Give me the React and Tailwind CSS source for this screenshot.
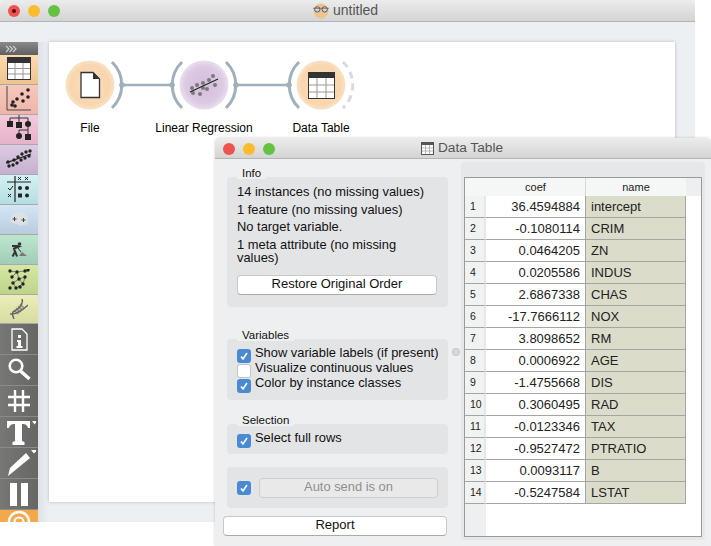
import { Fragment } from 'react';

const FONT = "font-['Liberation_Sans',Arial,sans-serif]";

const rows = [
  ['36.4594884', 'intercept'],
  ['-0.1080114', 'CRIM'],
  ['0.0464205', 'ZN'],
  ['0.0205586', 'INDUS'],
  ['2.6867338', 'CHAS'],
  ['-17.7666112', 'NOX'],
  ['3.8098652', 'RM'],
  ['0.0006922', 'AGE'],
  ['-1.4755668', 'DIS'],
  ['0.3060495', 'RAD'],
  ['-0.0123346', 'TAX'],
  ['-0.9527472', 'PTRATIO'],
  ['0.0093117', 'B'],
  ['-0.5247584', 'LSTAT'],
];

function Dots({ pts, r = 1.7, fill = '#222' }) {
  return pts.map(([x, y], i) => <circle key={i} cx={x} cy={y} r={r} fill={fill} />);
}

function TableIcon() {
  return (
    <svg className="mb-[3px]" width="24" height="23" viewBox="0 0 24 23">
      <rect x="0.5" y="0.5" width="23" height="22" fill="#fff" stroke="#333" />
      <rect x="0" y="0" width="24" height="6" fill="#333" />
      <path d="M8 6V22M16 6V22M1 11.5H23M1 17H23" stroke="#999" strokeWidth="1" />
    </svg>
  );
}

function ScatterIcon() {
  return (
    <svg className="mb-[2px]" width="26" height="26" viewBox="0 0 26 26">
      <path d="M1 0V24H25" fill="none" stroke="#444" strokeWidth="1" />
      <Dots pts={[[6, 19], [9, 20], [7, 16], [11, 13], [16, 8], [17, 15], [22, 4], [22, 11]]} r="1.8" />
    </svg>
  );
}

function TreeIcon() {
  return (
    <svg className="mb-[1px]" width="26" height="28" viewBox="0 0 26 28">
      <path d="M4 6V3H22V6M13 0V7M13 15H22M13 15V19M22 12V19" fill="none" stroke="#333" strokeWidth="1" />
      <rect x="1" y="6" width="6" height="6" fill="#222" />
      <rect x="10" y="7" width="6" height="6" fill="#222" />
      <circle cx="22" cy="9" r="3" fill="#222" />
      <circle cx="13" cy="21" r="3" fill="#222" />
      <rect x="19" y="19" width="6" height="6" fill="#222" />
    </svg>
  );
}

function RegressionIcon() {
  return (
    <svg className="mb-[3px]" width="26" height="20" viewBox="0 0 26 20">
      <path d="M0 15L25 6" stroke="#222" strokeWidth="1.2" />
      <Dots pts={[[2, 14], [3, 18], [7, 17], [8, 12], [11, 15], [12, 9], [15, 12], [16, 6], [19, 10], [20, 4], [23, 8], [24, 3]]} />
    </svg>
  );
}

function SieveIcon() {
  return (
    <svg className="mb-[2px]" width="26" height="26" viewBox="0 0 26 26">
      <path d="M1 6H25M9 0V26" stroke="#222" strokeWidth="1.2" />
      <path d="M12 1L15 4M15 1L12 4M19 1L22 4M22 1L19 4M2 18L5 21M5 18L2 21" stroke="#222" />
      <path d="M2 12L4 14L7 10" fill="none" stroke="#222" />
      <circle cx="14" cy="12" r="2" fill="#222" />
      <circle cx="21" cy="12" r="2" fill="#222" />
      <rect x="12" y="17.5" width="4" height="4" fill="#222" />
      <circle cx="21" cy="19.5" r="2" fill="#222" />
    </svg>
  );
}

function CloudIcon() {
  return (
    <svg className="mb-[1px]" width="18" height="15" viewBox="0 0 18 15">
      <Dots pts={[[4, 5], [7, 3], [6, 9], [9, 6], [12, 3], [15, 6], [13, 10], [10, 11], [15, 10], [3, 8]]} r="2.8" fill="#dde1e6" />
      <path d="M2.5 7H6.5M4.5 5V9M11.5 8H15.5M13.5 6V10" stroke="#444" strokeWidth="1" />
    </svg>
  );
}

function WorkerIcon() {
  return (
    <svg width="16" height="15" viewBox="0 0 16 15">
      <circle cx="8.5" cy="2" r="1.8" fill="#333" />
      <path d="M1 4H6L8 4.5L3 6.5L4 10L1.5 14.5M4 9L6 14.5" fill="none" stroke="#333" strokeWidth="2" />
      <path d="M7 6L10 10" stroke="#333" />
      <path d="M8 14L11 10L16 14Z" fill="#777" />
    </svg>
  );
}

function NetworkIcon() {
  return (
    <svg width="22" height="21" viewBox="0 0 22 21">
      <path d="M2 2L9 3L17 2L20 1M4 8L9 3L11 10L17 8L15 15L11 10L5 14L8 19L15 15" fill="none" stroke="#555" strokeWidth="0.7" />
      <Dots pts={[[2, 2], [9, 3], [17, 2], [20, 1], [4, 8], [11, 10], [17, 8], [5, 14], [15, 15], [2, 19], [8, 19], [12, 18]]} />
    </svg>
  );
}

function DnaIcon() {
  return (
    <svg width="18" height="20" viewBox="0 0 18 20">
      <path d="M6 14L12 5L14 10L8 16Z" fill="#c2c2ae" />
      <path d="M6 9L10 13M8 7L12 11M10 5L14 9M4 11L8 15" stroke="#8e8e80" strokeWidth="1.2" />
      <path d="M12 0C14 6 7 11 3 13C2 15 3 18 4 20M0 15C6 16 14 10 18 6" fill="none" stroke="#666" strokeWidth="1.5" />
    </svg>
  );
}

function InfoIcon() {
  return (
    <svg width="17" height="23" viewBox="0 0 17 23">
      <path d="M1 1H11L16 6V22H1Z" fill="none" stroke="#fff" strokeWidth="1.3" />
      <rect x="7" y="7" width="3" height="3" fill="#fff" />
      <path d="M6 12H10V18H11.5V20H5.5V18H7V14H6Z" fill="#fff" />
    </svg>
  );
}

function SearchIcon() {
  return (
    <svg width="24" height="24" viewBox="0 0 24 24">
      <circle cx="9" cy="8" r="6.3" fill="none" stroke="#fff" strokeWidth="2.6" />
      <path d="M13.5 13L22.5 21" stroke="#fff" strokeWidth="3.4" />
    </svg>
  );
}

function HashIcon() {
  return (
    <svg width="22" height="22" viewBox="0 0 22 22">
      <path d="M7 0V22M15 0V22M0 7H22M0 15H22" stroke="#fff" strokeWidth="2.4" />
    </svg>
  );
}

function TextIcon() {
  return (
    <svg width="34" height="27" viewBox="0 0 34 27">
      <path d="M5 2H28V9H26C25 6 24 5 20 5V22L22.5 23V26H10.5V23L13 22V5C9 5 8 6 7 9H5Z" fill="#fff" />
      <path d="M30 2H35L32.5 5.5Z" fill="#fff" />
    </svg>
  );
}

function PenIcon() {
  return (
    <svg width="34" height="27" viewBox="0 0 34 27">
      <path d="M24 3L28 8L11 22L6 26L8 18Z" fill="#fff" />
      <path d="M29 0H35L32 3.5Z" fill="#fff" />
    </svg>
  );
}

function PauseIcon() {
  return (
    <div className="flex gap-[4px]">
      <div className="w-[7px] h-[23px] bg-white" />
      <div className="w-[7px] h-[23px] bg-white" />
    </div>
  );
}

const categories = [
  ['h-[30px] bg-linear-to-b from-[#fbdbb0] to-[#eec490]', <TableIcon />],
  ['h-[30px] bg-linear-to-b from-[#f8c8bb] to-[#efb5aa]', <ScatterIcon />],
  ['h-[30px] bg-linear-to-b from-[#f5c9db] to-[#e5b2ca]', <TreeIcon />],
  ['h-[30px] bg-linear-to-b from-[#dccbe3] to-[#c6b0d0]', <RegressionIcon />],
  ['h-[30px] bg-linear-to-b from-[#d3f1f2] to-[#b5dee2]', <SieveIcon />],
  ['h-[30px] bg-linear-to-b from-[#d5e6f4] to-[#b7ccdf]', <CloudIcon />],
  ['h-[30px] bg-linear-to-b from-[#bde6cf] to-[#a0cdb8]', <WorkerIcon />],
  ['h-[30px] bg-linear-to-b from-[#d6e8a4] to-[#bdd38a]', <NetworkIcon />],
  ['h-[29px] bg-linear-to-b from-[#ebeeb9] to-[#d8dca0]', <DnaIcon />],
];

const tools = [<InfoIcon />, <SearchIcon />, <HashIcon />, <TextIcon />, <PenIcon />, <PauseIcon />];

function Sidebar() {
  return (
    <div className="w-[38px] flex flex-col shrink-0">
      <div className="h-[13px] bg-linear-to-b from-[#8a8a8a] to-[#5f5f5f] flex items-center pl-[5px]">
        <svg width="12" height="8" viewBox="0 0 12 8">
          <path d="M1 1L4 4L1 7M4.5 1L7.5 4L4.5 7M8 1L11 4L8 7" fill="none" stroke="#d0d0d0" strokeWidth="1.1" />
        </svg>
      </div>
      {categories.map(([cls, icon], i) => (
        <div key={i} className={`${cls} border-b border-[#a8a8a8] flex items-center justify-center`}>
          {icon}
        </div>
      ))}
      {tools.map((icon, i) => (
        <div key={i} className="h-[31px] bg-linear-to-r from-[#777876] to-[#666664] border-b border-[#8b8b8b] flex items-center justify-center">
          {icon}
        </div>
      ))}
      <div className="flex-1 bg-[#f4a84c] flex justify-center overflow-hidden">
        <svg width="24" height="12" viewBox="0 0 24 12">
          <circle cx="12" cy="12" r="10" fill="none" stroke="#fff" strokeWidth="2.4" />
          <circle cx="12" cy="12" r="4.5" fill="none" stroke="#fff" strokeWidth="2.2" />
        </svg>
      </div>
    </div>
  );
}

function Lights({ dot }) {
  const base = 'w-[12px] h-[12px] rounded-full';
  return (
    <div className="absolute left-[8px] top-[5px] flex gap-[8px]">
      <div className={`${base} bg-[#f0524e] flex items-center justify-center`}>
        {dot && <div className="w-[4px] h-[4px] rounded-full bg-[#5a0d0b]" />}
      </div>
      <div className={`${base} bg-[#fbbb2e]`} />
      <div className={`${base} bg-[#63c244]`} />
    </div>
  );
}

function GlassesFace() {
  return (
    <svg width="16" height="16" viewBox="0 0 15 15">
      <circle cx="7.5" cy="7.5" r="7" fill="#ecc48f" />
      <circle cx="4" cy="6" r="2.5" fill="#cfd4d6" stroke="#555" strokeWidth="0.9" />
      <circle cx="11" cy="6" r="2.5" fill="#cfd4d6" stroke="#555" strokeWidth="0.9" />
      <path d="M0 5H15" stroke="#555" strokeWidth="0.6" />
    </svg>
  );
}

function Scheme() {
  return (
    <svg className="absolute left-0 top-0" width="400" height="130" viewBox="0 0 400 130">
      <defs>
        <radialGradient id="peach">
          <stop offset="0%" stopColor="#f9e0c4" />
          <stop offset="80%" stopColor="#f8d6ad" />
          <stop offset="100%" stopColor="#f9e3c9" />
        </radialGradient>
        <radialGradient id="lilac">
          <stop offset="0%" stopColor="#d3bedc" />
          <stop offset="75%" stopColor="#dcc9e3" />
          <stop offset="100%" stopColor="#e9dfee" />
        </radialGradient>
      </defs>
      <g fill="none" stroke="#9fb0ba" strokeWidth="3">
        <path d="M122 43H172M236 43H289" strokeWidth="2.4" />
        <path d="M112 20A32 32 0 0 1 112 66" />
        <path d="M182 20A32 32 0 0 0 182 66" />
        <path d="M226 20A32 32 0 0 1 226 66" />
        <path d="M299 20A32 32 0 0 0 299 66" />
        <path d="M343 20A32 32 0 0 1 343 66" strokeDasharray="7 5" stroke="#d4dbe0" />
      </g>
      <g fill="#9fb0ba">
        <circle cx="122" cy="43" r="2.8" />
        <circle cx="172" cy="43" r="2.8" />
        <circle cx="236" cy="43" r="2.8" />
        <circle cx="289" cy="43" r="2.8" />
      </g>
      <circle cx="90" cy="43" r="24.5" fill="url(#peach)" />
      <circle cx="204" cy="43" r="24.5" fill="url(#lilac)" />
      <circle cx="321" cy="43" r="24.5" fill="url(#peach)" />
      <path d="M81 30.5H93L99.5 37V55.5H81Z" fill="#fff" stroke="#333" strokeWidth="1.3" />
      <path d="M93 30L100 37H93Z" fill="#333" />
      <g transform="translate(191 33)">
        <Dots pts={[[2, 18], [9, 19], [1, 13], [6, 10], [12, 8], [12, 13], [18, 5], [22, 1], [24, 10], [16, 14]]} r="2" fill="#7a7a7a" />
        <path d="M-1 17L27 4" stroke="#222" strokeWidth="1.1" />
      </g>
      <g transform="translate(308 30)">
        <rect x="0.5" y="0.5" width="26" height="26" fill="#fff" stroke="#333" />
        <rect x="0" y="0" width="27" height="6" fill="#333" />
        <path d="M9 6V26M18 6V26M1 13H26M1 20H26" stroke="#999" />
      </g>
    </svg>
  );
}

function NodeLabel({ className, children }) {
  return <div className={`absolute top-[79px] -translate-x-1/2 text-[12px] leading-[14px] text-black whitespace-nowrap ${className}`}>{children}</div>;
}

function Group({ title, className, children }) {
  return (
    <div className={`relative bg-[#e3e4e6] rounded-[4px] ${className}`}>
      {title && (
        <div className="absolute left-[10px] -top-[4px] -translate-y-1/2 px-[5px] text-[11.5px] leading-[12px] text-[#111] bg-[#eeeff1]">
          {title}
        </div>
      )}
      {children}
    </div>
  );
}

function Check({ on = true }) {
  return (
    <div className={`w-[14px] h-[14px] rounded-[3px] shrink-0 flex items-center justify-center ${on ? 'bg-[#4a8ad3]' : 'bg-white border border-[#c4c4c4]'}`}>
      {on && (
        <svg width="10" height="10" viewBox="0 0 10 10">
          <path d="M2 5.5L4 8L8 2" fill="none" stroke="#fff" strokeWidth="1.6" />
        </svg>
      )}
    </div>
  );
}

function CheckRow({ on, children }) {
  return (
    <div className="h-[15px] flex items-center gap-[4px] text-[12.9px] text-[#111] whitespace-nowrap">
      <Check on={on} />
      <span className="-mt-[6px]">{children}</span>
    </div>
  );
}

function DataTable() {
  return (
    <div className="bg-white border border-[#9a9a9a] h-[360px] overflow-hidden">
      <div className="grid grid-cols-[21px_99px_101px_1fr] text-[13px] text-[#222]">
        <div className="col-span-2 h-[18px] bg-[#f5f6f6] flex items-center justify-center pl-[21px] text-[11px]">coef</div>
        <div className="h-[18px] bg-[#f5f6f6] border-l border-[#d8d8d8] flex items-center justify-center text-[11px]">name</div>
        <div className="h-[18px] bg-[#eeeff1]" />
        {rows.map(([coef, name], i) => (
          <Fragment key={name}>
            <div className="h-[22px] bg-[#f1f2f2] border-b border-[#a5a5a5] border-r-2 border-r-[#e6e7e7] flex items-center pl-[5px] text-[10.5px]">{i + 1}</div>
            <div className="h-[22px] bg-white border-b border-[#a5a5a5] flex items-center justify-end pr-[5px] pt-[1px]">{coef}</div>
            <div className="h-[22px] bg-[#dcdccb] border-b border-r border-l border-[#a5a5a5] flex items-center pl-[5px] pt-[1px]">{name}</div>
            <div className="h-[22px] bg-white" />
          </Fragment>
        ))}
        <div className="h-[34px] bg-[#eeeff1]" />
      </div>
    </div>
  );
}

export default function App() {
  return (
    <div className={`relative w-[711px] h-[546px] bg-white overflow-hidden ${FONT}`}>
      {/* main canvas window */}
      <div className="absolute left-0 top-0 w-[695px] h-[522px] flex flex-col bg-[#edf0f3]">
        <div className="relative h-[22px] shrink-0 bg-linear-to-b from-[#ececec] to-[#d4d4d4] border-b border-[#b4b4b4] flex items-center justify-center rounded-t-[5px]">
          <Lights dot />
          <div className="flex items-center gap-[4px] pr-[4px] text-[14px] text-[#555]">
            <GlassesFace />
            <span>untitled</span>
          </div>
        </div>
        <div className="h-[20px] shrink-0" />
        <div className="flex flex-1 min-h-0">
          <Sidebar />
          <div className="w-[11px] bg-linear-to-r from-[#dde2e7] to-[#edf0f3]" />
          <div className="w-[626px] h-[460px] bg-white shadow-[0_0_3px_rgba(120,130,140,0.5)] relative">
            <div className="absolute -left-[49px] top-0 w-[400px] h-[130px]">
              <Scheme />
              <NodeLabel className="left-[90px]">File</NodeLabel>
              <NodeLabel className="left-[204px]">Linear Regression</NodeLabel>
              <NodeLabel className="left-[321px]">Data Table</NodeLabel>
            </div>
          </div>
        </div>
      </div>

      {/* data table window */}
      <div className="absolute left-[215px] top-[138px] w-[496px] h-[408px] bg-[#eeeff1] rounded-t-[5px] flex flex-col shadow-[0_0_3px_rgba(0,0,0,0.2)]">
        <div className="relative h-[21px] shrink-0 bg-linear-to-b from-[#ececec] to-[#d4d4d4] border-b border-[#b4b4b4] rounded-t-[5px] flex items-center justify-center">
          <Lights />
          <div className="flex items-center gap-[4px] text-[13.7px] text-[#555] ml-[-2px]">
            <svg width="13" height="13" viewBox="0 0 13 13">
              <rect x="0.5" y="0.5" width="12" height="12" fill="#fff" stroke="#555" />
              <rect x="0" y="0" width="13" height="3" fill="#555" />
              <path d="M4.5 3V12M8.5 3V12M1 6H12M1 9H12" stroke="#aaa" strokeWidth="0.8" />
            </svg>
            <span>Data Table</span>
          </div>
        </div>
        <div className="flex flex-1 min-h-0">
          <div className="w-[233px] shrink-0 pl-[12px] flex flex-col">
            <Group title="Info" className="mt-[18px] h-[130px] pt-[6px] px-[10px] text-[12.9px] text-[#111]">
              <div className="leading-[17px]">14 instances (no missing values)</div>
              <div className="leading-[17px] mt-[1px]">1 feature (no missing values)</div>
              <div className="leading-[17px]">No target variable.</div>
              <div className="leading-[13px] mt-[3px]">1 meta attribute (no missing<br />values)</div>
              <button className="mt-[11px] w-[200px] h-[20px] pb-[3px] leading-[16px] bg-white rounded-[4px] border border-[#c8c8c8] border-b-[#aaa] text-[13px] text-[#111] block">
                Restore Original Order
              </button>
            </Group>
            <Group title="Variables" className="mt-[32px] h-[61px] pt-[9px] px-[10px] flex flex-col">
              <CheckRow>Show variable labels (if present)</CheckRow>
              <CheckRow on={false}>Visualize continuous values</CheckRow>
              <CheckRow>Color by instance classes</CheckRow>
            </Group>
            <Group title="Selection" className="mt-[24px] h-[30px] pt-[9px] px-[10px]">
              <CheckRow>Select full rows</CheckRow>
            </Group>
            <Group className="mt-[13px] h-[41px] px-[10px] flex items-center gap-[8px]">
              <Check />
              <button className="w-[179px] h-[20px] pb-[3px] leading-[16px] bg-[#e9e9ea] rounded-[4px] border border-[#cfcfcf] text-[12.9px] text-[#8f8f8f]">
                Auto send is on
              </button>
            </Group>
            <button className="mt-[8px] -ml-[4px] w-[224px] h-[20px] pb-[3px] leading-[16px] bg-white rounded-[4px] border border-[#c8c8c8] border-b-[#aaa] text-[13px] text-[#111]">
              Report
            </button>
          </div>
          <div className="relative w-[13px] shrink-0">
            <div className="absolute left-[4px] top-[189px] w-[8px] h-[8px] rounded-full bg-[#d8d8d8] border border-[#c2c2c2]" />
          </div>
          <div className="w-[244px] h-[378px] mt-[3px] bg-[#e6e7e9] rounded-[4px] px-[3px] pt-[15px]">
            <DataTable />
          </div>
        </div>
      </div>
    </div>
  );
}
